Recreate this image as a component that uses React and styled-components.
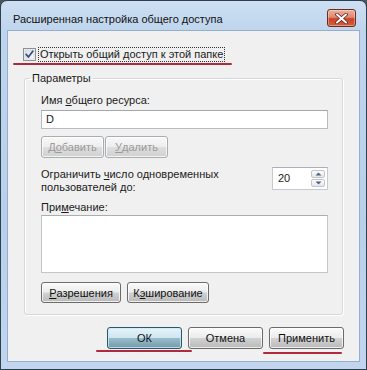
import React from "react";
import styled, { createGlobalStyle, css } from "styled-components";

const Global = createGlobalStyle`
  html, body { margin: 0; padding: 0; background: #4b5560; }
  body { font-family: "Liberation Sans", Arial, sans-serif; font-size: 11px; color: #1a1a1a; }
  * { box-sizing: border-box; }
`;

const Window = styled.div`
  width: 367px;
  height: 370px;
  border: 1px solid #2e3f4f;
  border-radius: 7px 7px 0 0;
  background: linear-gradient(180deg, #cddff2 0%, #bfd5ed 8%, #b9d0ea 60%, #c1d6ee 100%);
  padding: 0 6px 7px 6px;
  display: flex;
  flex-direction: column;
  overflow: hidden;
`;

const TitleBar = styled.div`
  height: 29px;
  display: flex;
  align-items: flex-start;
  justify-content: space-between;
  flex: none;
`;

const Title = styled.div`
  margin: 10px 0 0 6px;
  font-size: 11px;
  line-height: 16px;
  color: #111;
`;

const CloseButton = styled.div`
  margin: 8px 4px 0 0;
  width: 29px;
  height: 18px;
  border: 1px solid #6e2a1c;
  border-radius: 3px;
  background: linear-gradient(180deg, #eab0a0 0%, #e08870 45%, #c8432a 55%, #d0603c 100%);
  box-shadow: inset 0 0 0 1px rgba(255,255,255,0.35);
  display: flex;
  align-items: center;
  justify-content: center;
`;

const Client = styled.div`
  flex: 1;
  background: #f0f0f0;
  border: 1px solid #94aecb;
  display: flex;
  flex-direction: column;
`;

const ShareRow = styled.div`
  position: relative;
  margin: 16px 0 0 15px;
  display: flex;
  align-items: center;
  gap: 2px;
  height: 15px;
`;

const FocusLabel = styled.span`
  border: 1px dotted #333;
  padding: 0 1px;
  line-height: 13px;
  white-space: nowrap;
`;

const Mark = styled.div`
  position: absolute;
  height: 2px;
  background: #b02a3e;
  border-radius: 1px;
  left: ${(p) => p.$left}px;
  top: ${(p) => p.$top}px;
  width: ${(p) => p.$width}px;
`;

const GroupBox = styled.fieldset`
  margin: 9px 0 0 16px;
  width: 319px;
  border: 1px solid #d2d8dc;
  border-radius: 3px;
  box-shadow: inset 1px 1px 0 #fff, 1px 1px 0 #fff;
  padding: 8px 14px 11px 16px;
  display: flex;
  flex-direction: column;
  min-width: 0;
`;

const Legend = styled.legend`
  margin-left: -11px;
  padding: 0 2px;
  line-height: 14px;
`;

const FieldLabel = styled.div`
  line-height: 14px;
  margin-top: ${(p) => p.$mt || 0}px;
`;

const TextBox = styled.div`
  margin-top: 3px;
  height: 19px;
  background: #fff;
  border: 1px solid #b8bcc2;
  border-top-color: #a3a8ad;
  padding: 0 4px;
  line-height: 17px;
`;

const NoteArea = styled.div`
  margin-top: 1px;
  height: 58px;
  background: #fff;
  border: 1px solid #c2c6cb;
  border-top-color: #a9aeb3;
`;

const ButtonRow = styled.div`
  display: flex;
  gap: ${(p) => p.$gap || 2}px;
  margin-top: ${(p) => p.$mt}px;
`;

const Button = styled.div`
  position: relative;
  width: ${(p) => p.$w}px;
  height: ${(p) => p.$h || 22}px;
  border: 1px solid #6b6b6b;
  border-radius: 3px;
  display: flex;
  align-items: center;
  justify-content: center;
  line-height: 14px;
  color: #111;
  white-space: nowrap;
  background: linear-gradient(180deg, #fbfbfb 0%, #ececec 48%, #d2d2d2 52%, #b9b9b9 100%);
  box-shadow: inset 0 0 0 1px rgba(255,255,255,0.75);
  ${(p) =>
    p.$disabled &&
    css`
      color: #9a9a9a;
      border-color: #a8adb0;
      background: linear-gradient(180deg, #f8f8f8 0%, #eeeeee 48%, #dedede 52%, #d0d0d0 100%);
    `}
  ${(p) =>
    p.$default &&
    css`
      border-color: #2d5669;
      background: linear-gradient(180deg, #e6f3f9 0%, #cfe6f0 48%, #98bccb 52%, #7499a8 100%);
      box-shadow: inset 0 0 0 1px rgba(200,235,250,0.8);
    `}
`;

const LimitRow = styled.div`
  margin-top: 9px;
  display: flex;
  justify-content: space-between;
  align-items: flex-start;
`;

const LimitText = styled.div`
  padding-top: 1px;
  line-height: 13px;
`;

const Spinner = styled.div`
  width: 56px;
  height: 23px;
  background: #fff;
  border: 1px solid #c6cacf;
  border-top-color: #abb0b5;
  display: flex;
  align-items: stretch;
  padding: 2px 2px 2px 0;
`;

const SpinValue = styled.div`
  flex: 1;
  padding-left: 5px;
  line-height: 17px;
`;

const SpinButtons = styled.div`
  width: 14px;
  display: flex;
  flex-direction: column;
  gap: 1px;
`;

const SpinButton = styled.div`
  flex: 1;
  border: 1px solid #c2c6ca;
  border-radius: 2px;
  background: linear-gradient(180deg, #fdfdfd, #e6e6e6);
  display: flex;
  align-items: center;
  justify-content: center;
`;

const Footer = styled.div`
  margin-top: 12px;
  display: flex;
  justify-content: flex-end;
  gap: 6px;
  padding-right: 15px;
`;

const Checkbox = () => (
  <svg width="13" height="13" viewBox="0 0 13 13">
    <defs>
      <linearGradient id="cbg" x1="0" y1="0" x2="1" y2="1">
        <stop offset="0" stopColor="#d9dde2" />
        <stop offset="1" stopColor="#fbfbfb" />
      </linearGradient>
    </defs>
    <rect x="0.5" y="0.5" width="12" height="12" fill="#f4f4f4" stroke="#8e8f8f" />
    <rect x="2" y="2" width="9" height="9" fill="url(#cbg)" stroke="#c6cbd1" strokeWidth="0.6" />
    <path d="M3.2 6.4 L5.4 9 L9.8 3.2" fill="none" stroke="#33508c" strokeWidth="1.8" strokeLinecap="round" strokeLinejoin="round" />
  </svg>
);

const CloseX = () => (
  <svg width="13" height="11" viewBox="0 0 13 11">
    <path d="M2 1.5 L11 9.5 M11 1.5 L2 9.5" stroke="#6a2418" strokeWidth="3.6" strokeLinecap="round" />
    <path d="M2 1.5 L11 9.5 M11 1.5 L2 9.5" stroke="#ffffff" strokeWidth="2" strokeLinecap="round" />
  </svg>
);

const Arrow = ({ up }) => (
  <svg width="7" height="4" viewBox="0 0 7 4">
    <path d={up ? "M0.5 3.5 L3.5 0.5 L6.5 3.5 Z" : "M0.5 0.5 L3.5 3.5 L6.5 0.5 Z"} fill="#4d6185" />
  </svg>
);

export default function App() {
  return (
    <>
      <Global />
      <Window>
        <TitleBar>
          <Title>Расширенная настройка общего доступа</Title>
          <CloseButton>
            <CloseX />
          </CloseButton>
        </TitleBar>
        <Client>
          <ShareRow>
            <Checkbox />
            <FocusLabel>Открыть общий доступ к этой папке</FocusLabel>
            <Mark $left={-10} $top={16} $width={219} />
          </ShareRow>
          <GroupBox>
            <Legend>Параметры</Legend>
            <FieldLabel>
              Имя <u>о</u>бщего ресурса:
            </FieldLabel>
            <TextBox>D</TextBox>
            <ButtonRow $mt={7} $gap={1}>
              <Button $w={63} $disabled>
                Д<u>о</u>бавить
              </Button>
              <Button $w={63} $disabled>
                <u>У</u>далить
              </Button>
            </ButtonRow>
            <LimitRow>
              <LimitText>
                Ограничить <u>ч</u>исло одновременных
                <br />
                пользователей до:
              </LimitText>
              <Spinner>
                <SpinValue>20</SpinValue>
                <SpinButtons>
                  <SpinButton>
                    <Arrow up />
                  </SpinButton>
                  <SpinButton>
                    <Arrow />
                  </SpinButton>
                </SpinButtons>
              </Spinner>
            </LimitRow>
            <FieldLabel $mt={6}>
              При<u>м</u>ечание:
            </FieldLabel>
            <NoteArea />
            <ButtonRow $mt={9} $gap={6}>
              <Button $w={80} $h={21}>
                <u>Р</u>азрешения
              </Button>
              <Button $w={82} $h={21}>
                К<u>э</u>ширование
              </Button>
            </ButtonRow>
          </GroupBox>
          <Footer>
            <Button $w={75} $default>
              ОК
              <Mark $left={-12} $top={22} $width={96} />
            </Button>
            <Button $w={75}>Отмена</Button>
            <Button $w={75}>
              Применить
              <Mark $left={-7} $top={24} $width={79} />
            </Button>
          </Footer>
        </Client>
      </Window>
    </>
  );
}
